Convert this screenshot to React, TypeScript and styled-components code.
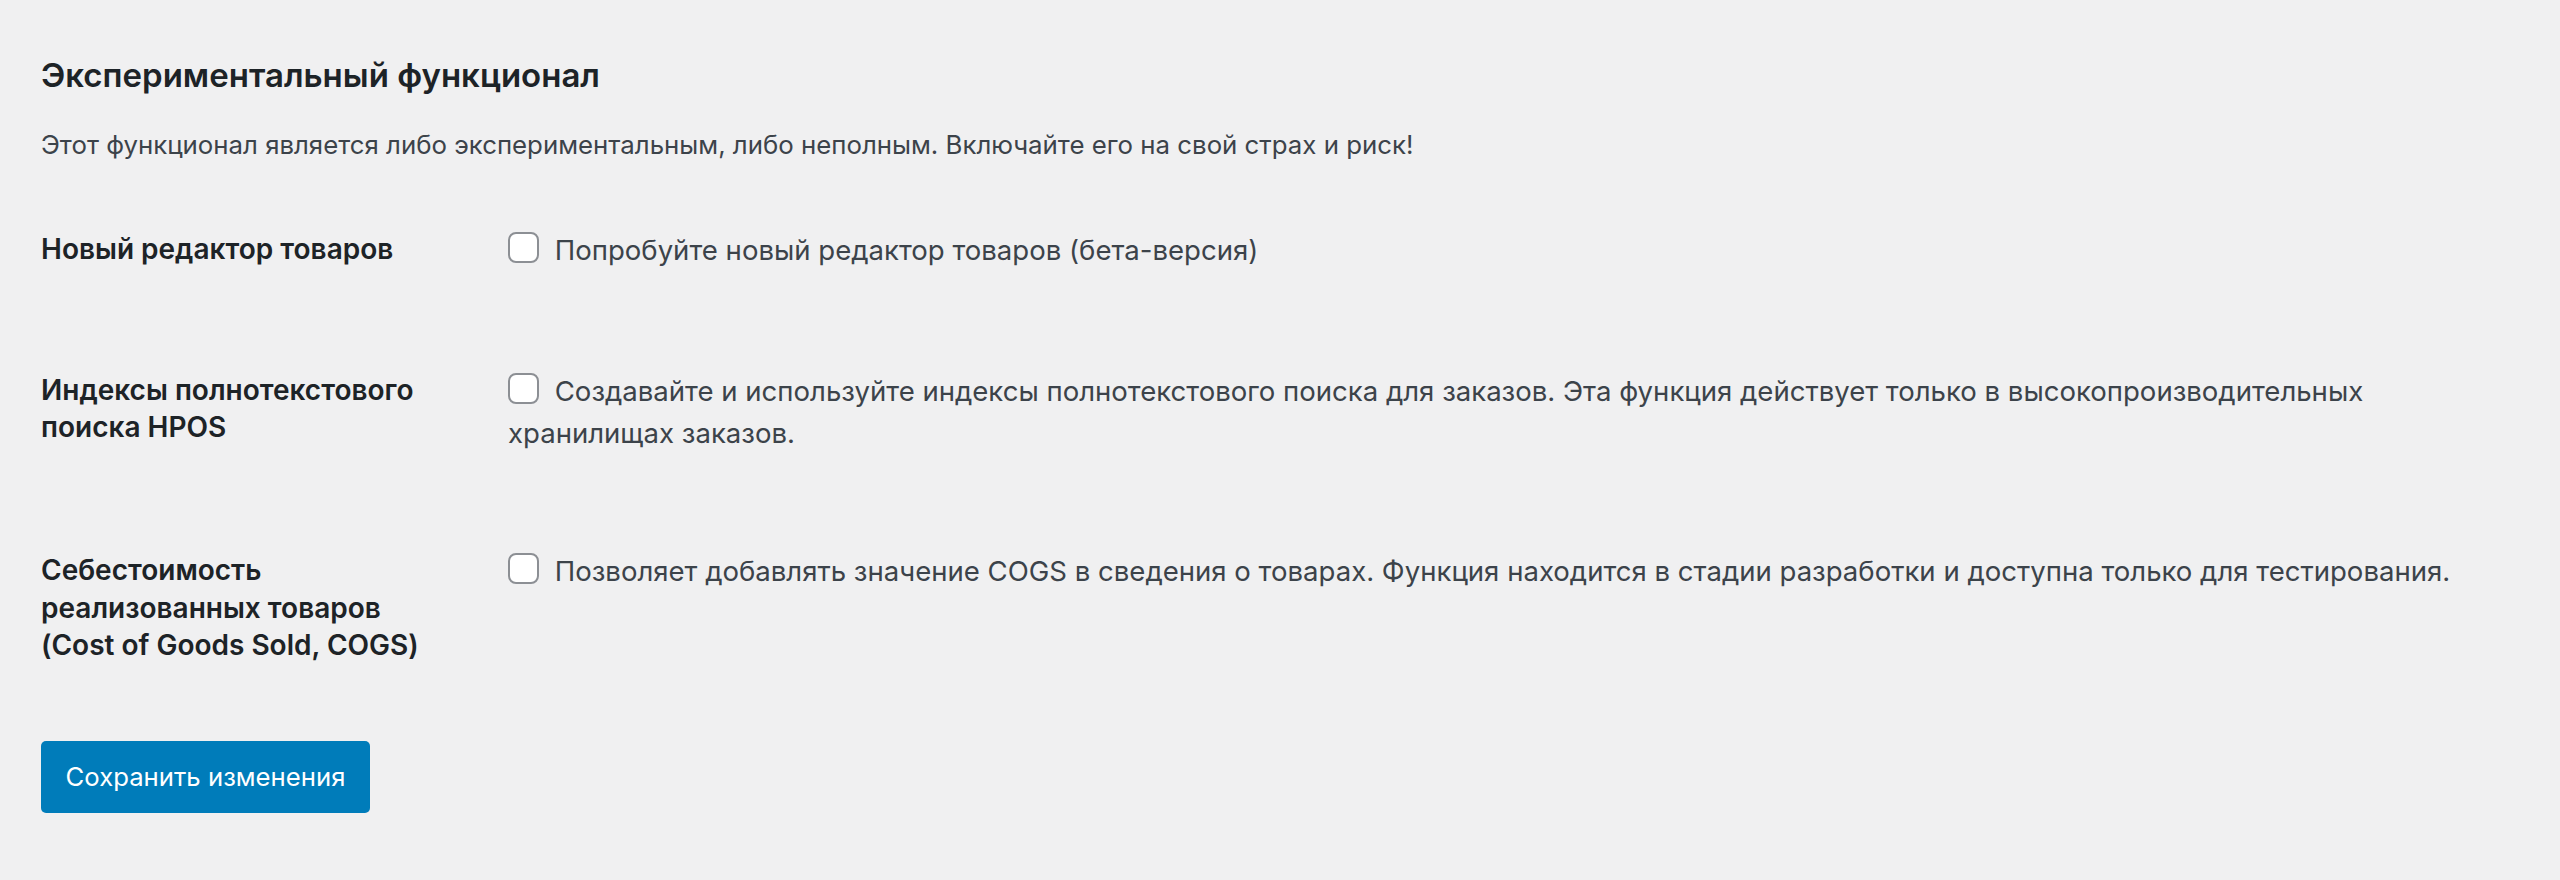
import React from 'react';
import styled, { createGlobalStyle } from 'styled-components';

const GlobalStyle = createGlobalStyle`
  html, body {
    margin: 0;
    padding: 0;
    background: #f0f0f1;
  }
  body {
    font-family: Inter, "Noto Sans", "Liberation Sans", sans-serif;
    color: #3c434a;
    -webkit-font-smoothing: antialiased;
  }
`;

const Wrap = styled.div`
  padding: 51px 60px 40px 41px;
`;

const Title = styled.h2`
  margin: 0;
  font-size: 33px;
  font-weight: 600;
  line-height: 48px;
  color: #1d2327;
`;

const Intro = styled.p`
  margin: 25px 0 0;
  font-size: 25.8px;
  line-height: 42px;
  color: #3c434a;
`;

const FormTable = styled.div`
  display: grid;
  grid-template-columns: 467px 1fr;
  margin-top: 12px;
`;

const Label = styled.div`
  padding: 53px 72px 50px 0;
  font-size: 28px;
  font-weight: 600;
  line-height: 37.5px;
  color: #1d2327;
`;

const Field = styled.div`
  padding: 51px 0 45.5px;
  font-size: 27.55px;
  line-height: 42px;
  color: #3c434a;
`;

const Check = styled.span`
  display: inline-block;
  box-sizing: border-box;
  width: 31px;
  height: 31px;
  margin: 0 8px 0 0;
  vertical-align: -3px;
  background: #fff;
  border: 2px solid #8c8f94;
  border-radius: 8px;
`;

const Submit = styled.div`
  padding-top: 26.5px;
`;

const PrimaryButton = styled.button`
  box-sizing: border-box;
  width: 329px;
  height: 72px;
  padding: 0;
  border: 0;
  border-radius: 5px;
  background: #007cba;
  color: #fff;
  font-family: inherit;
  font-size: 25.7px;
  line-height: 72px;
  text-align: center;
`;

const rows = [
  {
    label: 'Новый редактор товаров',
    text: 'Попробуйте новый редактор товаров (бета-версия)',
  },
  {
    label: 'Индексы полнотекстового поиска HPOS',
    text: 'Создавайте и используйте индексы полнотекстового поиска для заказов. Эта функция действует только в высокопроизводительных хранилищах заказов.',
  },
  {
    label: 'Себестоимость реализованных товаров (Cost of Goods Sold, COGS)',
    text: 'Позволяет добавлять значение COGS в сведения о товарах. Функция находится в стадии разработки и доступна только для тестирования.',
  },
];

export default function App() {
  return (
    <>
      <GlobalStyle />
      <Wrap>
        <Title>Экспериментальный функционал</Title>
        <Intro>
          Этот функционал является либо экспериментальным, либо неполным. Включайте его на свой страх и риск!
        </Intro>
        <FormTable>
          {rows.map(r => (
            <React.Fragment key={r.label}>
              <Label>{r.label}</Label>
              <Field>
                <Check /> {r.text}
              </Field>
            </React.Fragment>
          ))}
        </FormTable>
        <Submit>
          <PrimaryButton>Сохранить изменения</PrimaryButton>
        </Submit>
      </Wrap>
    </>
  );
}
